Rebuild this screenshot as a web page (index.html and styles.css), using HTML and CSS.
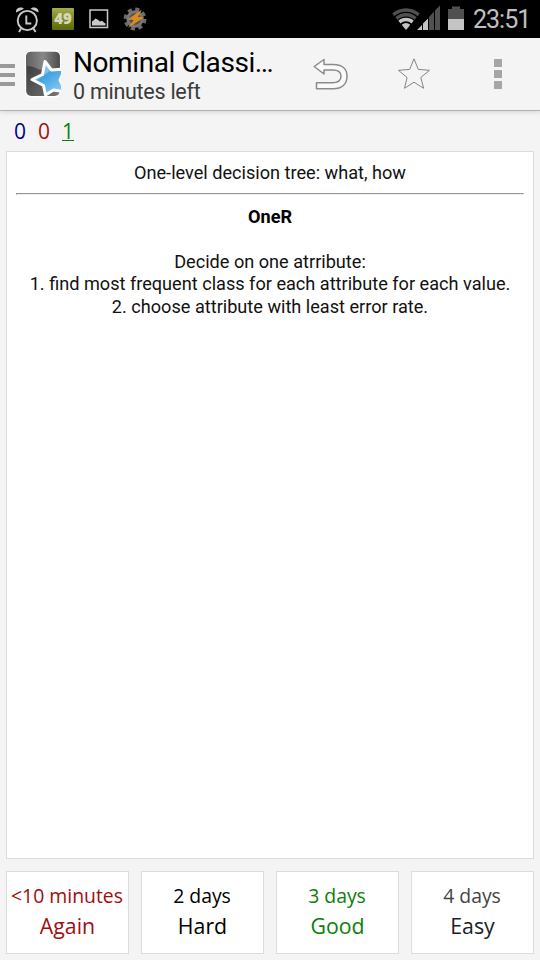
FILE: index.html
```html
<!DOCTYPE html>
<html lang="en">
<head>
<meta charset="utf-8">
<title>Nominal Classification</title>
<link rel="stylesheet" href="styles.css">
</head>
<body>
<div class="statusbar">
  <svg class="notifications" width="160" height="38" viewBox="0 0 160 38">
    <defs>
      <linearGradient id="badge" x1="0" y1="0" x2="0" y2="1"><stop offset="0" stop-color="#a5ae49"/><stop offset=".5" stop-color="#7b861d"/><stop offset="1" stop-color="#5f6a09"/></linearGradient>
    </defs>
    <g fill="none" stroke="#c9c9c9" stroke-width="1.9">
      <circle cx="27.300" cy="20.500" r="9.600"/>
      <path d="M26.300 15.500v8h5M21 28.500l-2 3.500M33.500 28.500l2 3.500"/>
    </g>
    <path d="M16 12.500C15.500 9 18.500 7 22 7.500l2 1.200zM38.500 12.500C39 9 36 7 32.500 7.500l-2 1.200z" fill="#c9c9c9"/>
    <rect x="52" y="8" width="22" height="22" rx="1" fill="url(#badge)"/>
    <path d="M90 10h17.500v17.500H90z" fill="none" stroke="#c9c9c9" stroke-width="1.500"/>
    <path d="M92 25.500v-4l2-1.500 1.500-1.500 2.500 1.200 2 1.800 2-.8 2 1.800 1.500 1v2z" fill="#c9c9c9"/>
    <circle cx="135" cy="19" r="9.700" fill="none" stroke="#6c6c6c" stroke-width="3.500" stroke-dasharray="4.100 3.518"/>
    <circle cx="135" cy="19" r="7.200" fill="#4c4c4c" stroke="#777" stroke-width="3"/>
    <path d="M142 9.500L127.500 19.500l6 .5-5.500 8L144 17.500l-6-.8z" fill="#d98a24"/>
  </svg>
  <span class="badge-number">49</span>
  <div class="system">
    <svg width="76" height="38" viewBox="390 0 76 38">
      <defs><clipPath id="fan"><path d="M391.500 12.500Q406 3 420.500 12.500L406 30z"/></clipPath></defs>
      <g clip-path="url(#fan)" fill="none" stroke-width="3.500">
        <circle cx="406" cy="29" r="19" stroke="#505050"/>
        <circle cx="406" cy="29" r="14.300" stroke="#505050"/>
        <circle cx="406" cy="29" r="9.600" stroke="#c4c4c4"/>
        <circle cx="406" cy="29" r="2.900" stroke="#c4c4c4" stroke-width="6"/>
      </g>
      <path d="M417 30l5-5V30zM423 30v-6.500l5-5V30z" fill="#c4c4c4"/>
      <path d="M429 30V17l5-5.300V30zM435 30V10.500l5-5V30z" fill="#505050"/>
      <path d="M448 19V9h4V6.500h8V9h4v10z" fill="#505050"/>
      <path d="M448 19h16v11h-16z" fill="#c4c4c4"/>
    </svg>
    <span class="clock">23:51</span>
  </div>
</div>

<header class="appbar">
  <svg class="menu" width="15" height="22" viewBox="0 0 15 22"><path d="M0 0h15v4H0zM0 9h15v4H0zM0 18h15v4H0z" fill="#999"/></svg>
  <svg class="logo" width="38" height="50" viewBox="24 49 38 50">
    <defs>
      <linearGradient id="dark" x1="0" y1="0" x2="1" y2="1"><stop offset="0" stop-color="#333"/><stop offset="1" stop-color="#777"/></linearGradient>
      <linearGradient id="shine" x1="0" y1="0" x2="1" y2="0"><stop offset="0" stop-color="#606060"/><stop offset=".5" stop-color="#888"/><stop offset="1" stop-color="#4c4c4c"/></linearGradient>
      <linearGradient id="blue" x1="0" y1="0" x2=".7" y2="1"><stop offset="0" stop-color="#a2d4f4"/><stop offset=".42" stop-color="#7cc0ee"/><stop offset=".46" stop-color="#3fa0e3"/><stop offset="1" stop-color="#8bcbf3"/></linearGradient>
      <clipPath id="tile"><rect x="25" y="50.500" width="36" height="47" rx="3"/></clipPath>
    </defs>
    <rect x="25" y="50.500" width="36" height="47" rx="6" fill="#fff"/>
    <rect x="26.200" y="51.800" width="33.600" height="44.200" rx="5" fill="url(#dark)"/>
    <path d="M26.200 66V57q0-5 5-5h23.600q5 0 5 5v13Q42 72 36 68Q32 66 26.200 66z" fill="url(#shine)"/>
    <g clip-path="url(#tile)">
      <path d="M45 61.500L51.500 70L65 69L60 80L66 92L53.500 90L45.500 95L43.500 85.500L32 79.500L42.500 74.500z" fill="url(#blue)" stroke="#fff" stroke-width="3" stroke-linejoin="round"/>
    </g>
  </svg>
  <div class="titles">
    <div class="title">Nominal Classi…</div>
    <div class="subtitle">0 minutes left</div>
  </div>
  <svg class="actions" width="250" height="72" viewBox="290 38 250 72">
    <path d="M314.200 66.500L324 59.500V64.500H333C342 64.500 347 69 347 76C347 84 342 88.800 333 88.800H316.500V82.800H332C338 82.800 341 80.500 341 76.300C341 72 338 70 333 70H324V74z" fill="#fafafa" stroke="#8b8b8b" stroke-width="1.500" stroke-linejoin="round"/>
    <path d="M414 58.800l4.300 10.600 11.200.9-8.700 7.200 2.900 10.800-9.700-6.100-9.500 6.100 2.600-10.800-8.700-7.200 11.300-.9z" fill="none" stroke="#858585" stroke-width="1"/>
    <path d="M494 59h8v8h-8zM494 70h8v8h-8zM494 81h8v8h-8z" fill="#a6a6a6"/>
  </svg>
</header>

<div class="counts"><span class="new">0</span><span class="learn">0</span><span class="review">1</span></div>

<main class="card">
  <div class="line question"><span>One-level decision tree: what, how</span></div>
  <hr>
  <div class="line bold"><span>OneR</span></div>
  <div class="line"><br></div>
  <div class="line"><span>Decide on one atrribute:</span></div>
  <div class="line"><span>1. find most frequent class for each attribute for each value.</span></div>
  <div class="line"><span>2. choose attribute with least error rate.</span></div>
</main>

<div class="answers">
  <div class="answer again"><span class="due">&lt;10 minutes</span><span class="ease">Again</span></div>
  <div class="answer hard"><span class="due">2 days</span><span class="ease">Hard</span></div>
  <div class="answer good"><span class="due">3 days</span><span class="ease">Good</span></div>
  <div class="answer easy"><span class="due">4 days</span><span class="ease">Easy</span></div>
</div>
</body>
</html>
```
FILE: styles.css
```css
* { box-sizing: border-box; }
body {
  margin: 0;
  width: 540px;
  height: 960px;
  overflow: hidden;
  display: flex;
  flex-direction: column;
  background: #f4f4f4;
  font-family: Roboto, "Noto Sans", sans-serif;
  color: #000;
}
svg { display: block; flex: none; }
.statusbar {
  position: relative;
  height: 38px;
  flex: none;
  display: flex;
  justify-content: space-between;
  background: #000;
}
.badge-number {
  position: absolute;
  left: 52px;
  top: 7px;
  width: 22px;
  text-align: center;
  font: 800 15px/22px "Open Sans", sans-serif;
  color: #d4d7bc;
}
.system { display: flex; width: 150px; }
.clock {
  margin-left: 7px;
  font-size: 25px;
  line-height: 40px;
  letter-spacing: -1px;
  color: #c0c0c0;
  white-space: nowrap;
}
.appbar {
  height: 73px;
  flex: none;
  display: flex;
  background: #f4f4f4;
  border-bottom: 1px solid #b2b2b2;
  box-shadow: 0 1px 5px rgba(0, 0, 0, .14);
}
.menu { margin-top: 26px; }
.logo { margin: 11px 0 0 9px; }
.titles { width: 228px; padding: 8px 0 0 11px; white-space: nowrap; }
.title { font-size: 28px; line-height: 33px; letter-spacing: -.42px; }
.subtitle { font-size: 21.5px; line-height: 26px; letter-spacing: -.27px; color: #3b3b3b; }
.counts {
  height: 40px;
  flex: none;
  display: flex;
  gap: 12px;
  padding: 6px 0 0 14px;
  font: 21px/29px "Open Sans", sans-serif;
}
.new { color: #00008b; }
.learn { color: #a01010; }
.review { color: #0a800a; text-decoration: underline; text-decoration-thickness: 1px; }
.card {
  height: 708px;
  flex: none;
  margin: 0 6px;
  padding: 10px 9px;
  background: #fff;
  border: 1px solid #dcdcdc;
  text-align: center;
  font-size: 18.14px;
  color: #111;
}
.line { line-height: 22.4px; height: 22.4px; white-space: nowrap; }
.bold { font-weight: 700; color: #000; }
hr {
  height: 2px;
  margin: 9px 0 10.600px;
  border: 1px solid;
  border-color: #939893 #eee #eee #939893;
}
.answers {
  flex: none;
  display: grid;
  grid-template-columns: repeat(4, 123px);
  gap: 12px;
  margin: 12px 6px 0;
}
.answer {
  height: 83px;
  display: flex;
  flex-direction: column;
  align-items: center;
  padding-top: 9px;
  background: #fff;
  border: 1px solid #dcdcdc;
  font-family: "Open Sans", sans-serif;
  white-space: nowrap;
}
.due { font-size: 19.4px; line-height: 30px; margin-left: -1px; }
.ease { font-size: 21.3px; line-height: 30px; }
.again { color: #a00d10; }
.good { color: #0a800a; }
.easy { color: #1a1e26; }
.easy .due { color: #444; }
```
